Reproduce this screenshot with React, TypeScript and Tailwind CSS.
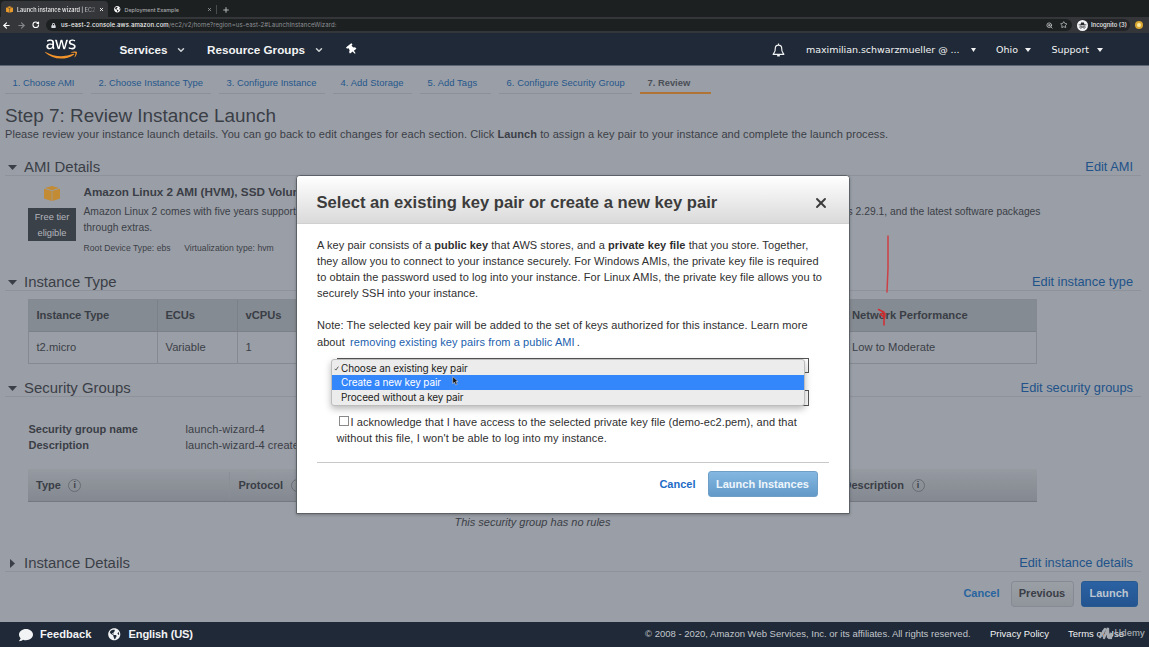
import type { ReactNode } from 'react';
import { FaAws, FaComment, FaGlobeAmericas, FaLock, FaThumbtack } from 'react-icons/fa';
import { ArrowLeft, ArrowRight, RotateCw, Star, ZoomIn, X, Plus, ChevronDown } from 'lucide-react';

function BrowserChrome() {
  return (
    <div className="font-['Inter','Liberation_Sans',sans-serif] text-[6px] leading-[10px] text-[#d8dadd]">
      <div className="flex h-[17px] items-end bg-[#1d2021]">
        <div className="ml-[1px] flex h-[16px] w-[107px] items-center rounded-t-[4px] bg-[#35363a] pl-[5px] pt-px">
          <Cube className="h-[7px] w-[7px] text-[#e79a2b]" />
          <span className="ml-[4px] w-[79px] whitespace-nowrap bg-linear-to-r from-[#f2f2f2] from-80% to-[#55565a] bg-clip-text text-[5.5px] font-semibold text-transparent">
            Launch instance wizard | EC2 M
          </span>
          <X className="ml-[3px] h-[5px] w-[5px] text-white" strokeWidth={4} />
        </div>
        <div className="flex h-[16px] items-center pt-px">
          <FaGlobeAmericas className="ml-[6px] h-[6.5px] w-[6.5px] text-white" />
          <span className="ml-[4px] w-[82px] whitespace-nowrap text-[5.4px] font-medium text-[#a9abae]">Deployment Example</span>
          <X className="h-[5px] w-[5px] text-[#b5b7ba]" strokeWidth={3} />
          <span className="ml-[4px] h-[9px] w-px bg-[#4a4c4f]" />
          <Plus className="ml-[5px] h-[8px] w-[8px] text-[#b5b7ba]" strokeWidth={3} />
        </div>
      </div>
      <div className="flex h-[16px] items-center bg-[#35363a]">
        <ArrowLeft className="ml-[2px] h-[9px] w-[9px] text-white" strokeWidth={3} />
        <ArrowRight className="ml-[6px] h-[9px] w-[9px] text-[#84868a]" strokeWidth={3} />
        <RotateCw className="ml-[6px] h-[7.5px] w-[7.5px] text-white" strokeWidth={3.4} />
        <div className="ml-[6.5px] flex h-[12px] flex-1 items-center rounded-full bg-[#1d2021] pl-[5px] pr-[5px]">
          <FaLock className="h-[5px] w-[5px] text-[#d8dadd]" />
          <span className="ml-[5px] flex-1 whitespace-nowrap text-[6px] tracking-[0.1px] text-[#8e9195]">
            <span className="font-medium text-[#f0f0f0]">us-east-2.console.aws.amazon.com</span>
            /ec2/v2/home?region=us-east-2#LaunchInstanceWizard:
          </span>
          <ZoomIn className="h-[7px] w-[7px]" strokeWidth={2.4} />
          <Star className="ml-[7px] h-[7.5px] w-[7.5px]" strokeWidth={2.2} />
        </div>
        <div className="ml-[5px] flex h-[12px] w-[53px] items-center rounded-full bg-[#222427]">
          <svg viewBox="0 0 20 20" className="h-[11px] w-[11px]">
            <circle cx="10" cy="10" r="10" fill="#f4f5f6" />
            <path d="M6.5 8 7.4 4.4h5.2L13.5 8H17v1.4H3V8z" fill="#26282b" />
            <circle cx="7" cy="13" r="2" fill="none" stroke="#26282b" strokeWidth="1.2" />
            <circle cx="13" cy="13" r="2" fill="none" stroke="#26282b" strokeWidth="1.2" />
            <path d="M9 12.6h2" stroke="#26282b" />
          </svg>
          <span className="ml-[3px] whitespace-nowrap text-[5.9px] font-medium text-[#f0f0f0]">Incognito (3)</span>
        </div>
        <span className="ml-[5px] mr-[6px] flex h-[8px] w-[8px] items-center justify-center rounded-full bg-[#d9a632]">
          <span className="h-[4px] w-[4px] rounded-full bg-[#ffe9a0]" />
        </span>
      </div>
    </div>
  );
}

function Cube({ className }: { className: string }) {
  return (
    <svg viewBox="0 0 32 30" className={className} fill="currentColor">
      <path d="M16 0 30 4.2 16 8.400 2 4.200z" />
      <path d="M0 5.500 15.300 10V30L0 25z" />
      <path d="M32 5.500 16.700 10V30L32 25z" />
    </svg>
  );
}

function Caret({ className }: { className: string }) {
  return (
    <svg viewBox="0 0 10 6" className={className} fill="currentColor" preserveAspectRatio="none">
      <path d="M0 0h10L5 6z" />
    </svg>
  );
}

function AwsNav() {
  return (
    <header className="flex h-[33px] items-center border-b border-[#5b6470] bg-[#1f2937] pt-px text-[#f2f3f4]">
      <div className="relative -mt-px ml-[45px] h-[26px] w-[32px]">
        <FaAws className="absolute inset-0 h-[26px] w-[32px] text-white [clip-path:inset(0_0_41%_0)]" />
        <FaAws className="absolute inset-0 h-[26px] w-[32px] text-[#f0932b] [clip-path:inset(59%_0_0_0)]" />
      </div>
      <span className="ml-[42.500px] w-[48px] text-[11.7px] font-bold">Services</span>
      <ChevronDown className="ml-[8.500px] h-[10px] w-[10px] text-[#cfd2d6]" strokeWidth={3.6} />
      <span className="ml-[21px] w-[98px] whitespace-nowrap text-[11.7px] font-bold">Resource Groups</span>
      <ChevronDown className="ml-[8.5px] h-[10px] w-[10px] text-[#cfd2d6]" strokeWidth={3.6} />
      <FaThumbtack className="-mt-px ml-[23px] h-[11px] w-[10px] -rotate-[38deg] text-white" />
      <svg viewBox="0 0 24 26" className="ml-auto h-[14px] w-[13px]" fill="none" stroke="currentColor" strokeWidth="2.2" strokeLinejoin="round">
        <path d="M12 1v2.5M4 18c2-2 2-4.500 2-8a6 6 0 0 1 12 0c0 3.500 0 6 2 8l2 3H2z" />
        <path d="M9.500 23.500h5" strokeWidth="3" />
      </svg>
      <div className="ml-[21px] flex items-center whitespace-nowrap pt-px font-['DejaVu_Sans',sans-serif] text-[9.5px] leading-[16px]">
        <span className="w-[152px] tracking-[-0.04px]">maximilian.schwarzmueller @ ...</span>
        <Caret className="-mt-px ml-[13px] h-[4px] w-[5px]" />
        <span className="ml-[20px] w-[22px]">Ohio</span>
        <Caret className="-mt-px ml-[7px] h-[4px] w-[6px]" />
        <span className="ml-[20.5px] w-[38px]">Support</span>
        <Caret className="-mt-px ml-[7px] mr-[46.500px] h-[4px] w-[6px]" />
      </div>
    </header>
  );
}

function Steps() {
  return (
    <nav className="flex h-[28px] items-end gap-[8px] pl-[4.500px] text-[9.4px] leading-[12px] text-[#25578c]">
      <span className="w-[78px] whitespace-nowrap border-b border-[#8c9098] pb-[4px] pl-[8px] tracking-[0.04px]">1. Choose AMI</span>
      <span className="w-[120px] whitespace-nowrap border-b border-[#8c9098] pb-[4px] pl-[8px] tracking-[0.04px]">2. Choose Instance Type</span>
      <span className="w-[106px] whitespace-nowrap border-b border-[#8c9098] pb-[4px] pl-[8px] tracking-[0.04px]">3. Configure Instance</span>
      <span className="w-[79px] whitespace-nowrap border-b border-[#8c9098] pb-[4px] pl-[8px] tracking-[0.08px]">4. Add Storage</span>
      <span className="w-[71px] whitespace-nowrap border-b border-[#8c9098] pb-[4px] pl-[8px] tracking-[0.08px]">5. Add Tags</span>
      <span className="w-[133px] whitespace-nowrap border-b border-[#8c9098] pb-[4px] pl-[8px] tracking-[0.08px]">6. Configure Security Group</span>
      <span className="w-[71px] whitespace-nowrap border-b-2 border-[#b07437] pb-[3px] pl-[8px] font-bold text-[#4a4e56]">7. Review</span>
    </nav>
  );
}

function SectionHeader({ title, link, closed }: { title: string; link: string; closed?: boolean }) {
  return (
    <div className="ml-[5px] mr-[8px] flex h-[19px] items-center border-b border-[#8e929a] pt-[2px]">
      <Caret className={closed ? 'ml-[3px] mr-[7px] h-[5px] w-[9px] -rotate-90' : 'ml-[3px] mr-[7px] h-[5px] w-[9px]'} />
      <h2 className="text-[14.9px] leading-[18px]">{title}</h2>
      <a className="ml-auto mr-[8px] text-[12.8px] leading-[18px] text-[#21538a]">{link}</a>
    </div>
  );
}

function Info() {
  return (
    <span className="ml-[7.500px] flex h-[13px] w-[13px] items-center justify-center rounded-full border border-[#686c74] text-[9px] font-bold leading-none">
      i
    </span>
  );
}

function Cell({ className, children }: { className: string; children?: ReactNode }) {
  return <div className={`flex items-center whitespace-nowrap ${className}`}>{children}</div>;
}

function ReviewPage() {
  return (
    <main className="flex h-[556px] flex-col overflow-hidden bg-[#9a9ea6] text-[#3a3e46]">
      <Steps />
      <h1 className="ml-[5px] mt-[10px] text-[18.9px] leading-[24px]">Step 7: Review Instance Launch</h1>
      <p className="ml-[5px] whitespace-nowrap text-[11px] leading-[13px] tracking-[0.07px]">
        Please review your instance launch details. You can go back to edit changes for each section. Click <b>Launch</b> to assign a key pair
        to your instance and complete the launch process.
      </p>

      <div className="mt-[16px]">
        <SectionHeader title="AMI Details" link="Edit AMI" />
        <div className="flex h-[97px] pl-[28px] pt-[8px]">
          <div className="flex w-[48px] flex-col items-center">
            <Cube className="mt-[2px] h-[15px] w-[16px] text-[#c38b33]" />
            <div className="mt-[7px] flex h-[33px] w-[48px] flex-col items-center justify-center bg-[#3b4149] text-[9.3px] leading-[16px] text-[#b3b6bc]">
              <span>Free tier</span>
              <span>eligible</span>
            </div>
          </div>
          <div className="ml-[7.500px] w-[957px] whitespace-nowrap">
            <div className="w-[300px] text-[11.7px] font-bold leading-[16px]">Amazon Linux 2 AMI (HVM), SSD Volume Type</div>
            <div className="mt-[4px] flex justify-between text-[10.3px] leading-[16px]">
              <span>Amazon Linux 2 comes with five years support. It provides Linux kernel 4.14</span>
              <span>Binutils 2.29.1, and the latest software packages</span>
            </div>
            <div className="text-[10.3px] leading-[16px]">through extras.</div>
            <div className="mt-[6px] flex gap-[13.500px] text-[8.6px] leading-[12px] tracking-[0.04px]">
              <span>Root Device Type: ebs</span>
              <span>Virtualization type: hvm</span>
            </div>
          </div>
        </div>
      </div>

      <div className="-mt-[1px]">
        <SectionHeader title="Instance Type" link="Edit instance type" />
        <div className="ml-[28px] mt-[8px] w-[1009px] border border-[#858991] text-[11.2px]">
          <div className="flex h-[32px] border-b border-[#7c8087] bg-[#858b92] font-bold">
            <Cell className="w-[129px] border-r border-[#7c8087] pl-[7.500px] tracking-[-0.08px]">Instance Type</Cell>
            <Cell className="w-[79.500px] border-r border-[#7c8087] pl-[7.500px] tracking-[-0.1px]">ECUs</Cell>
            <Cell className="w-[578.500px] pl-[8px]">vCPUs</Cell>
            <Cell className="pl-[36px]">Network Performance</Cell>
          </div>
          <div className="flex h-[31px]">
            <Cell className="w-[129px] border-r border-[#858991] pl-[7.500px]">t2.micro</Cell>
            <Cell className="w-[79.500px] border-r border-[#858991] pl-[7.500px]">Variable</Cell>
            <Cell className="w-[578.500px] pl-[8px]">1</Cell>
            <Cell className="pl-[36px]">Low to Moderate</Cell>
          </div>
        </div>
      </div>

      <div className="mt-[14px]">
        <SectionHeader title="Security Groups" link="Edit security groups" />
        <div className="ml-[28.500px] mt-[24px] grid grid-cols-[157px_1fr] text-[11px] leading-[16px]">
          <b>Security group name</b>
          <span className="tracking-[0.1px]">launch-wizard-4</span>
          <b>Description</b>
          <span className="tracking-[0.1px]">launch-wizard-4 created 2020</span>
        </div>
        <div className="ml-[28px] mt-[16px] flex h-[33px] w-[1009px] items-center border-b border-[#74787f] bg-linear-to-b from-[#959aa1] to-[#848890] text-[11px] font-bold">
          <Cell className="w-[202px] border-r border-[#8a8e96] py-[5px] pl-[8px]">
            Type <Info />
          </Cell>
          <Cell className="w-[585px] pl-[8.500px]">
            Protocol <Info />
          </Cell>
          <Cell className="pl-[28.500px]">
            Description <Info />
          </Cell>
        </div>
        <p className="ml-[28px] mt-[12px] w-[1009px] text-center text-[11px] italic leading-[16px]">This security group has no rules</p>
      </div>

      <div className="mt-[23px]">
        <SectionHeader title="Instance Details" link="Edit instance details" closed />
        <div className="mr-[11.500px] mt-[8px] flex h-[27px] items-center justify-end text-[11px] font-bold">
          <span className="mr-[11px] text-[#27649f]">Cancel</span>
          <span className="mr-[7px] flex h-[26px] w-[63px] items-center justify-center rounded-[3px] border border-[#868a92] bg-linear-to-b from-[#9a9ea5] to-[#90949b]">
            Previous
          </span>
          <span className="flex h-[26px] w-[57px] items-center justify-center rounded-[3px] border border-[#285a92] bg-linear-to-b from-[#2b62a3] to-[#235490] text-[#bcc5d1]">
            Launch
          </span>
        </div>
      </div>
    </main>
  );
}

function Footer() {
  return (
    <footer className="relative flex h-[25px] items-center bg-[#1f2937] text-[#f2f3f4]">
      <FaComment className="ml-[19px] h-[14px] w-[14px]" />
      <span className="ml-[7px] w-[52px] text-[11.15px] font-bold">Feedback</span>
      <FaGlobeAmericas className="ml-[16px] h-[12.500px] w-[12.500px]" />
      <span className="ml-[8px] whitespace-nowrap text-[11.15px] font-bold tracking-[-0.15px]">English (US)</span>
      <div className="ml-auto flex whitespace-nowrap text-[9.5px]">
        <span className="w-[345px] text-[#c3c7cc]">© 2008 - 2020, Amazon Web Services, Inc. or its affiliates. All rights reserved.</span>
        <span className="w-[78px]">Privacy Policy</span>
        <span className="w-[81px]">Terms of Use</span>
      </div>
      <div className="absolute right-[4px] top-[3px] flex items-center text-[#a6abb2]">
        <svg viewBox="0 0 16 14" className="h-[14px] w-[16px]" fill="none" stroke="currentColor" strokeWidth="2.4" strokeLinecap="round">
          <path d="M2 11 7 3M6 12 10 2v9M11 12l2-5v5" />
        </svg>
        <span className="font-['Inter',sans-serif] text-[9px] font-medium leading-[15px]">Udemy</span>
      </div>
    </footer>
  );
}

function KeyPairDialog() {
  return (
    <div className="absolute left-[296px] top-[175px] flex h-[339px] w-[553.500px] flex-col overflow-hidden rounded-t-[4px] border border-[#5c6067] bg-white text-[#2f2f2f] shadow-[0_1px_3px_rgba(0,0,0,0.25)]">
      <div className="flex h-[48px] shrink-0 items-center justify-between border-b border-[#d0d0d0] bg-linear-to-b from-white to-[#dadada] pl-[19.500px] pr-[20px] pt-[6px]">
        <h3 className="pt-px text-[16.6px] font-bold text-[#3c3c3c] tracking-[0.01px]">Select an existing key pair or create a new key pair</h3>
        <X className="h-[16px] w-[16px] text-[#3c3c3c]" strokeWidth={2.8} />
      </div>
      <div className="flex flex-col whitespace-nowrap pl-[20px] pr-[20px] pt-[12.500px] text-[11px] leading-[16.200px]">
        <p className="tracking-[0.07px]">
          A key pair consists of a <b className="tracking-normal">public key</b> that AWS stores, and a <b>private key file</b> that you store. Together,
          <br />
          they allow you to connect to your instance securely. For Windows AMIs, the private key file is required
          <br />
          to obtain the password used to log into your instance. For Linux AMIs, the private key file allows you to
          <br />
          securely SSH into your instance.
        </p>
        <p className="mt-[16px] tracking-[0.065px]">
          Note: The selected key pair will be added to the set of keys authorized for this instance. Learn more
          <br />
          about <a className="ml-[2px] tracking-[0.09px] text-[#1c5fae]">removing existing key pairs from a public AMI</a>
          <span className="ml-[2px]">.</span>
        </p>
        <div className="relative mt-[8.500px] flex h-[48px] w-[491.500px] flex-col justify-between pl-[20px]">
          <div className="h-[15px] border border-[#555] bg-white" />
          <div className="h-[16px] border border-[#555] bg-white" />
          <div className="absolute left-[14px] top-px flex h-[47px] w-[474px] flex-col overflow-hidden rounded-[3px] border border-[#bdbdbd] bg-[#ececec] font-['Inter','Liberation_Sans',sans-serif] text-[10px] leading-[15px] tracking-[-0.13px] text-[#222] shadow-[0_3px_7px_rgba(0,0,0,0.28)]">
            <div className="flex h-[15px] items-center pt-px">
              <svg viewBox="0 0 8 8" className="ml-[2px] mr-[2px] h-[5px] w-[5px]" fill="none" stroke="#444" strokeWidth="1.400">
                <path d="m1 4.500 2 2L7 1" />
              </svg>
              Choose an existing key pair
            </div>
            <div className="h-[15px] bg-[#3486fb] pl-[9px] text-white">Create a new key pair</div>
            <div className="h-[15px] pl-[9px] leading-[14px]">Proceed without a key pair</div>
          </div>
          <svg viewBox="0 0 12 18" className="absolute left-[134.500px] top-[18px] h-[10px] w-[7px]">
            <path d="M1 1v13l3-3 2.500 5 2.500-1-2.500-5h4z" fill="#111" stroke="#ddd" strokeWidth="1" />
          </svg>
        </div>
        <div className="ml-[19.500px] mt-[8px] tracking-[0.075px]">
          <div className="flex items-center">
            <span className="-mt-[2px] ml-[2px] mr-[2px] h-[10px] w-[10px] border border-[#8a8a8a] bg-white" />
            I acknowledge that I have access to the selected private key file (demo-ec2.pem), and that
          </div>
          <div className="tracking-[0.1px]">without this file, I won't be able to log into my instance.</div>
        </div>
        <div className="mt-[15px] border-t border-[#c9c9c9]" />
        <div className="mr-[11px] mt-[8px] flex items-center justify-end text-[11px] font-bold">
          <span className="text-[#1d6cc6]">Cancel</span>
          <span className="ml-[12px] flex h-[26px] w-[110px] items-center justify-center rounded-[3px] border border-[#6f9fc7] bg-linear-to-b from-[#84b8e2] to-[#6299c8] text-[#eef6fc]">
            Launch Instances
          </span>
        </div>
      </div>
    </div>
  );
}

export default function App() {
  return (
    <div className="relative flex h-[647px] w-[1149px] flex-col overflow-hidden font-['Liberation_Sans',Arial,sans-serif]">
      <BrowserChrome />
      <AwsNav />
      <ReviewPage />
      <Footer />
      <KeyPairDialog />
      <svg viewBox="0 0 20 94" className="absolute left-[875px] top-[234px] h-[94px] w-[20px]" fill="none" stroke="#cc4146" strokeWidth="1.500" strokeLinecap="round">
        <path d="M13 2v32l-1 24" />
        <path d="M3.500 75.500 8.500 78l-3 2.500 4 3 .5-4-4.500-3M9 80v11" stroke="#d22c30" />
      </svg>
    </div>
  );
}
